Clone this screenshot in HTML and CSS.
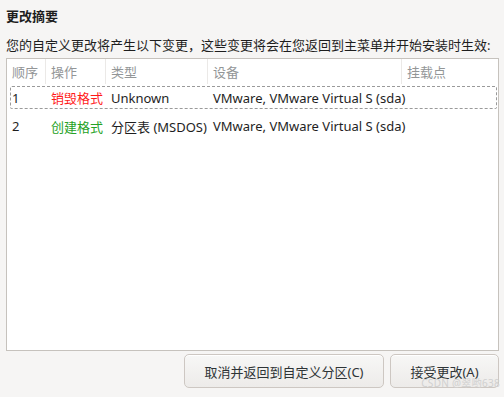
FILE: index.html
```html
<!DOCTYPE html>
<html lang="zh">
<head>
    <title>更改摘要</title>
    <meta charset="UTF-8">
    <link rel="stylesheet" href="styles.css">
</head>
<body>
<div class="dialog">
    <div class="title">更改摘要</div>
    <div class="desc">您的自定义更改将产生以下变更，这些变更将会在您返回到主菜单并开始安装时生效:</div>

    <!-- 变更列表 -->
    <div class="list">
        <div class="row head">
            <div class="cell">顺序</div>
            <div class="cell">操作</div>
            <div class="cell">类型</div>
            <div class="cell">设备</div>
            <div class="cell">挂载点</div>
        </div>
        <div class="row focus">
            <div class="cell">1</div>
            <div class="cell red">销毁格式</div>
            <div class="cell">Unknown</div>
            <div class="cell">VMware, VMware Virtual S (sda)</div>
            <div class="cell"></div>
        </div>
        <div class="row">
            <div class="cell">2</div>
            <div class="cell green">创建格式</div>
            <div class="cell">分区表 (MSDOS)</div>
            <div class="cell">VMware, VMware Virtual S (sda)</div>
            <div class="cell"></div>
        </div>
    </div>

    <div class="buttons">
        <button class="btn cancel">取消并返回到自定义分区(C)</button>
        <button class="btn accept">接受更改(A)</button>
    </div>
    <div class="mark">CSDN @翠哟638</div>
</div>
</body>
</html>
```

FILE: styles.css
```css
body { margin: 0; background: #f6f5f4; font-family: "Noto Sans", "Noto Sans CJK SC", sans-serif; font-size: 13px; color: #1e1e1e; }
.dialog { position: relative; height: 397px; box-sizing: border-box; padding: 7px 5px 9px 6px; display: flex; flex-direction: column; }
.title { font-weight: bold; line-height: 18px; }
.desc { margin-top: 11px; line-height: 18px; }
.list { flex: 1; margin-top: 4px; background: #fff; border: 1px solid #c6c2bd; }
.row { display: grid; grid-template-columns: 39px 60px 102px 194px 1fr; height: 28px; align-items: center; }
.row.head { height: 25px; color: #939697; align-items: stretch; }
.head .cell { border-right: 1px solid #ebe9e7; display: flex; align-items: center; }
.head .cell:last-child { border-right: none; }
.cell { padding-left: 5px; white-space: nowrap; }
.row.focus { margin: 2px 1px 3px 3px; height: 23px; outline: 1px dashed #9a9a9a; outline-offset: -1px; grid-template-columns: 36px 60px 102px 194px 1fr; border-radius: 2px; }
.focus .cell:first-child { padding-left: 2px; }
.red { color: #ff1a1a; }
.green { color: #26a226; }
.buttons { display: flex; justify-content: flex-end; gap: 6px; margin-top: 3px; }
.btn { height: 34px; font-family: inherit; font-size: 13px; color: #2e3436; border: 1px solid #cdc7c2; border-radius: 5px; background: linear-gradient(#f7f7f6, #edebe9); box-shadow: inset 0 1px #fff; }
.cancel { width: 200px; }
.accept { width: 109px; }
.mark { position: absolute; right: 4px; bottom: 9px; font-size: 10px; line-height: 10px; color: #d0d0d0; letter-spacing: 0.3px; }
```
